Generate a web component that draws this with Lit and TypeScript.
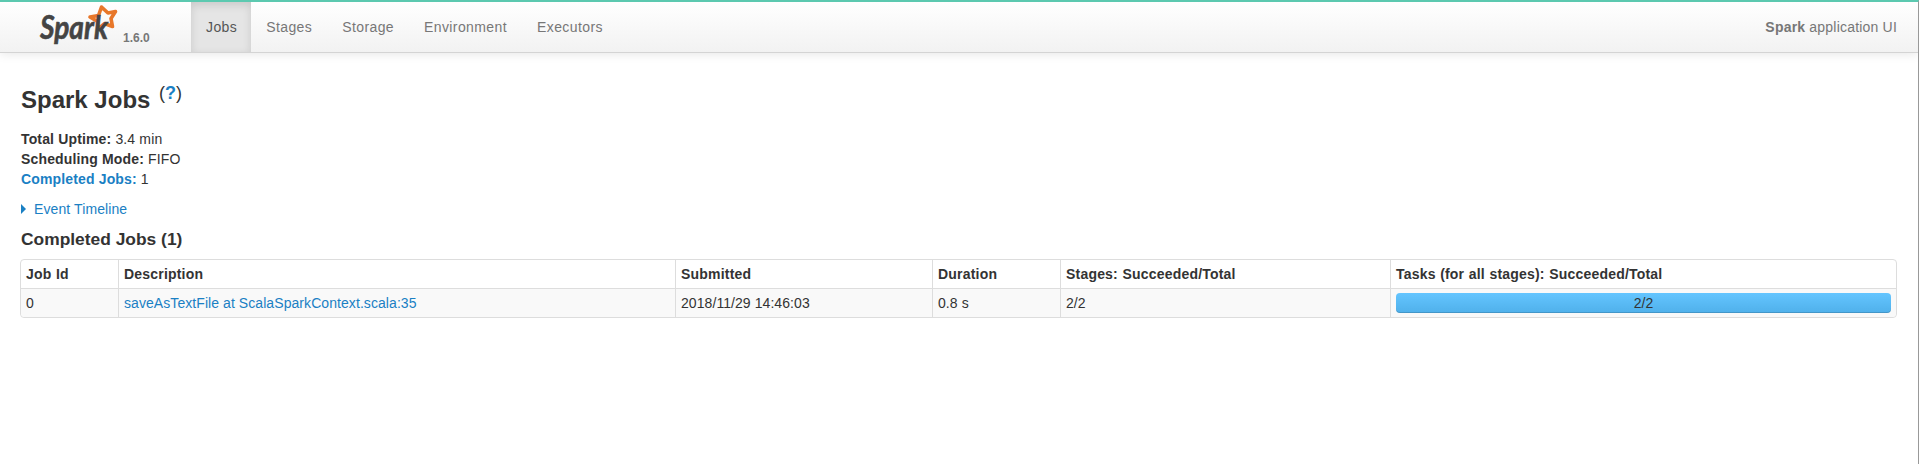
import { LitElement, html, css } from 'lit';
import { customElement } from 'lit/decorators.js';

const tabs = ['Jobs', 'Stages', 'Storage', 'Environment', 'Executors'];
const columns = ['Job Id', 'Description', 'Submitted', 'Duration', 'Stages: Succeeded/Total', 'Tasks (for all stages): Succeeded/Total'];

@customElement('app-root')
export default class AppRoot extends LitElement {
  static styles = css`
    :host {
      display: block;
      height: 464px;
      overflow: hidden;
      background: #fff;
      font-family: 'Liberation Sans', Arial, sans-serif;
      font-size: 14px;
      line-height: 20px;
      color: #333;
      box-sizing: border-box;
      border-top: 2px solid #5cc9b0;
      border-right: 1px solid #999;
    }
    a {
      color: #1a80c4;
      text-decoration: none;
    }
    .navbar {
      display: flex;
      align-items: stretch;
      height: 50px;
      background: linear-gradient(to bottom, #ffffff, #f2f2f2);
      border-bottom: 1px solid #d4d4d4;
      box-shadow: 0 1px 10px rgba(0, 0, 0, 0.1);
      padding-right: 21px;
    }
    .brand {
      display: flex;
      width: 191px;
      flex: none;
    }
    .tabs {
      display: flex;
      letter-spacing: 0.4px;
    }
    .tab {
      padding: 15px 15px 0;
      color: #777;
    }
    .tab.active {
      padding: 15px 14px 0 15px;
      background: #e5e5e5;
      box-shadow: inset 0 3px 8px rgba(0, 0, 0, 0.125);
      color: #555;
    }
    .app-name {
      margin-left: auto;
      padding-top: 15px;
      color: #777;
      letter-spacing: 0.2px;
    }
    .content {
      padding: 0 20px;
    }
    .intro {
      padding-left: 1px;
    }
    h3 {
      margin: 27px 0 0;
      font-size: 24px;
      line-height: 40px;
      font-weight: bold;
    }
    sup {
      font-size: 18px;
      font-weight: normal;
      line-height: 0;
      margin-left: 2px;
      position: relative;
      top: -9px;
      vertical-align: baseline;
    }
    sup a { font-weight: bold; }
    .summary {
      margin: 9px 0 0;
      padding: 0;
      list-style: none;
      letter-spacing: 0.15px;
    }
    .timeline {
      display: flex;
      align-items: center;
      gap: 8px;
      margin-top: 10px;
      letter-spacing: 0.1px;
    }
    .arrow {
      width: 0;
      height: 0;
      border-left: 5px solid #1a80c4;
      border-top: 5px solid transparent;
      border-bottom: 5px solid transparent;
    }
    h4 {
      margin: 10px 0 0;
      font-size: 17.4px;
      line-height: 20px;
      font-weight: bold;
    }
    table {
      width: 1877px;
      margin-top: 10px;
      table-layout: fixed;
      border: 1px solid #ddd;
      border-radius: 4px;
      border-collapse: separate;
      border-spacing: 0;
    }
    th, td {
      padding: 4px 5px;
      text-align: left;
      vertical-align: top;
      border-left: 1px solid #ddd;
      line-height: 20px;
    }
    th {
      font-weight: bold;
      letter-spacing: 0.2px;
      word-spacing: 0.4px;
    }
    th:first-child, td:first-child { border-left: 0; }
    td {
      border-top: 1px solid #ddd;
      background: #f9f9f9;
      letter-spacing: 0.07px;
    }
    tr:last-child td:first-child { border-bottom-left-radius: 4px; }
    tr:last-child td:last-child { border-bottom-right-radius: 4px; }
    .progress {
      height: 20px;
      border-radius: 4px;
      background: linear-gradient(to bottom, #64c5ff, #4fb0ea);
      box-shadow: inset 0 -1px 0 rgba(0, 0, 0, 0.15);
      text-align: center;
      line-height: 20px;
    }
    .logo {
      display: block;
      margin-left: 38px;
    }
    .logo text.word {
      font-family: 'Lato', sans-serif;
      font-weight: 700;
      font-style: italic;
      font-size: 33px;
      fill: #444;
      stroke: #444;
      stroke-width: 0.6px;
    }
    .logo text.version {
      font-family: 'Liberation Sans', sans-serif;
      font-weight: 700;
      font-size: 12px;
      fill: #777;
    }
  `;

  render() {
    return html`
      <nav class="navbar">
        <div class="brand">
          <svg class="logo" width="120" height="50" viewBox="0 0 120 50">
            <path d="M52 15 L60.5 13.5 L63.5 5 L70 11 L77.5 9.5 L73 16.5 L74.5 24.5 L66.5 21.5 L60 27 L59.5 19.5 Z" fill="none" stroke="#e8772a" stroke-width="3.6" stroke-linejoin="round"/>
            <text class="word" x="2" y="37" textLength="68" lengthAdjust="spacingAndGlyphs">Spark</text>
            <text class="version" x="85" y="40">1.6.0</text>
          </svg>
        </div>
        <div class="tabs">
          ${tabs.map((t, i) => html`<a class="tab ${i === 0 ? 'active' : ''}">${t}</a>`)}
        </div>
        <div class="app-name"><strong>Spark</strong> application UI</div>
      </nav>
      <main class="content">
        <div class="intro">
          <h3>Spark Jobs <sup>(<a>?</a>)</sup></h3>
          <ul class="summary">
            <li><strong>Total Uptime:</strong> 3.4 min</li>
            <li><strong>Scheduling Mode:</strong> FIFO</li>
            <li><a><strong>Completed Jobs:</strong></a> 1</li>
          </ul>
          <div class="timeline"><span class="arrow"></span><a>Event Timeline</a></div>
          <h4>Completed Jobs (1)</h4>
        </div>
        <table>
          <colgroup>
            <col style="width:97px" /><col style="width:557px" /><col style="width:257px" />
            <col style="width:128px" /><col style="width:330px" /><col />
          </colgroup>
          <thead>
            <tr>${columns.map((c) => html`<th>${c}</th>`)}</tr>
          </thead>
          <tbody>
            <tr>
              <td>0</td>
              <td><a>saveAsTextFile at ScalaSparkContext.scala:35</a></td>
              <td>2018/11/29 14:46:03</td>
              <td>0.8 s</td>
              <td>2/2</td>
              <td><div class="progress">2/2</div></td>
            </tr>
          </tbody>
        </table>
      </main>
    `;
  }
}
